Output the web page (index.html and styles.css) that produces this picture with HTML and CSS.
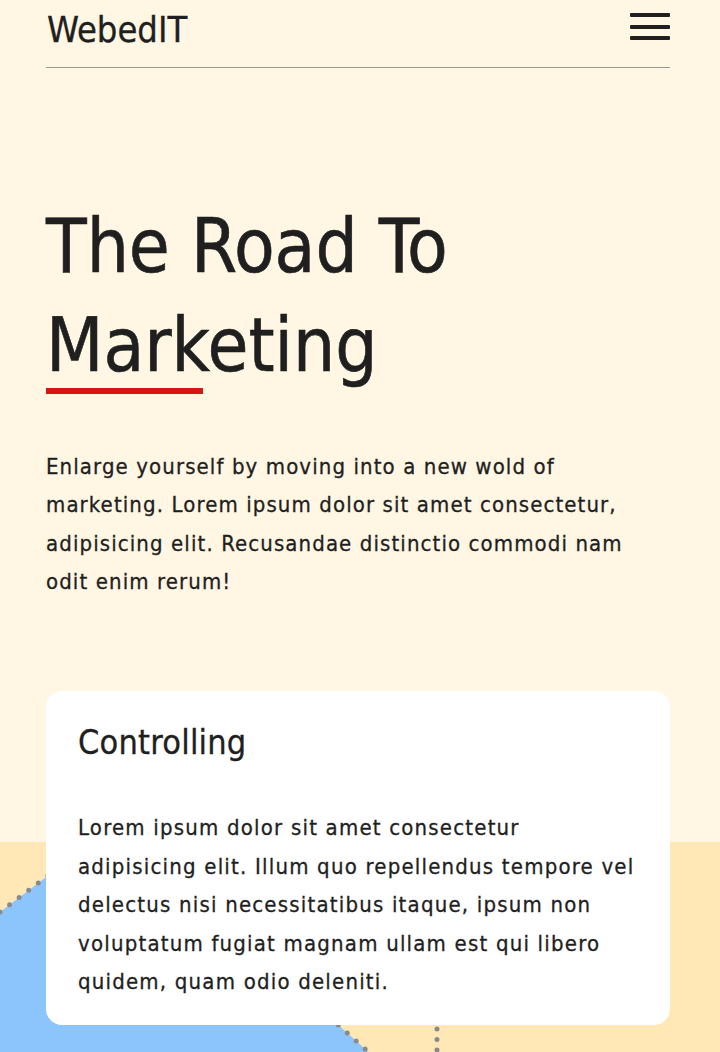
FILE: index.html
```html
<!DOCTYPE html>
<html lang="en">
<head>
<meta charset="utf-8">
<title>WebedIT</title>
<link rel="stylesheet" href="styles.css">
</head>
<body>
<div class="page">
  <header class="topbar">
    <div class="logo">WebedIT</div>
    <button class="menu" aria-label="Menu">
      <span class="bar"></span><span class="bar"></span><span class="bar"></span>
    </button>
  </header>
  <section class="hero">
    <h1 class="hero-title">The Road To Marketing</h1>
    <p class="hero-text">Enlarge yourself by moving into a new wold of marketing. Lorem ipsum dolor sit amet consectetur, adipisicing elit. Recusandae distinctio commodi nam odit enim rerum!</p>
  </section>
</div>
<section class="features">
  <svg class="deco" width="720" height="320" viewBox="0 0 720 320" aria-hidden="true">
    <polygon points="0,70 115,-17 450,283 0,283" fill="#8bc5fc"/>
    <polyline points="0,70 115,-17 450,283" fill="none" stroke="#8a8a8a" stroke-width="5" stroke-linecap="round" stroke-dasharray="0 12"/>
    <line x1="437" y1="166" x2="437" y2="320" stroke="#8a8a8a" stroke-width="5" stroke-linecap="round" stroke-dasharray="0 10.5"/>
  </svg>
  <div class="features-inner">
    <article class="card">
      <h2 class="card-title">Controlling</h2>
      <p class="card-text">Lorem ipsum dolor sit amet consectetur adipisicing elit. Illum quo repellendus tempore vel delectus nisi necessitatibus itaque, ipsum non voluptatum fugiat magnam ullam est qui libero quidem, quam odio deleniti.</p>
    </article>
  </div>
</section>
</body>
</html>
```
FILE: styles.css
```css
* { box-sizing: border-box; }
html, body {
  margin: 0;
  padding: 0;
  background: #fff7e4;
  color: #1f1f1f;
  font-family: "DejaVu Sans Condensed", "DejaVu Sans", sans-serif;
}
.page {
  padding: 0 50px 0 46px;
}
.topbar {
  height: 68px;
  display: flex;
  align-items: flex-start;
  justify-content: space-between;
  border-bottom: 1px solid #9a9a93;
  padding-left: 1px;
}
.logo {
  font-size: 36px;
  line-height: 1;
  padding-top: 12px;
  -webkit-text-stroke: 0.3px #1f1f1f;
}
.menu {
  background: none;
  border: 0;
  padding: 13px 0 0;
  margin: 0;
  width: 40px;
  display: flex;
  flex-direction: column;
  gap: 7.5px;
}
.menu .bar {
  display: block;
  height: 4px;
  width: 40px;
  background: #1f1f1f;
  border-radius: 1px;
}
.hero {
  padding-top: 129px;
}
.hero-title {
  margin: 0;
  font-weight: normal;
  font-size: 74px;
  line-height: 99px;
  width: 480px;
  -webkit-text-stroke: 0.6px #1f1f1f;
}
.hero-title::after {
  content: "";
  display: block;
  width: 157px;
  height: 6px;
  background: #d81515;
  margin-top: -7px;
}
.hero-text {
  margin: 54px 0 0;
  font-size: 22px;
  line-height: 38.4px;
  letter-spacing: 1.1px;
  -webkit-text-stroke: 0.3px #1f1f1f;
}
.features {
  position: relative;
  padding-top: 89px;
  padding-bottom: 120px;
  background: linear-gradient(to bottom, #fff7e4 0, #fff7e4 240px, #ffe8b6 240px);
  overflow: hidden;
}
.deco {
  position: absolute;
  left: 0;
  top: 240px;
}
.features-inner {
  position: relative;
  padding: 0 50px 0 46px;
}
.card {
  background: #ffffff;
  border-radius: 16px;
  padding: 32px 32px 23px;
}
.card-title {
  margin: 0;
  font-weight: normal;
  font-size: 34px;
  line-height: 39.6px;
  letter-spacing: 0.2px;
  -webkit-text-stroke: 0.3px #1f1f1f;
}
.card-text {
  margin: 47px 0 0;
  font-size: 22px;
  line-height: 38.5px;
  letter-spacing: 1.2px;
  -webkit-text-stroke: 0.3px #1f1f1f;
}
```
